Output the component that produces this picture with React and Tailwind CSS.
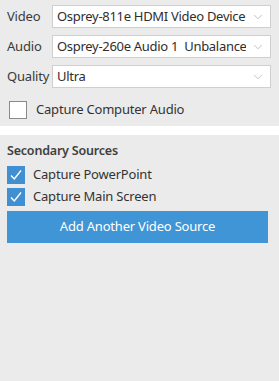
import { ChevronDown } from "lucide-react";

const font = { fontFamily: '"Noto Sans", "Open Sans", sans-serif' };

const SelectRow = ({ label, value }) => (
  <div className="flex items-center h-[23px]">
    <div className="w-[45px] shrink-0 text-[13px] tracking-[-0.2px] text-[#3a3a3a]">{label}</div>
    <div className="flex items-center h-full w-[219px] bg-white border border-[#cfcfcf] pl-[4px] pr-[5px]">
      <span className="flex-1 overflow-hidden whitespace-pre text-[13px] tracking-[-0.3px] text-[#2e2e2e] leading-[19px]">
        {value}
      </span>
      <ChevronDown className="w-[14px] h-[14px] text-[#a0a0a0] shrink-0 ml-[5px]" strokeWidth={1.1} />
    </div>
  </div>
);

const Checked = () => (
  <div className="w-[18px] h-[18px] bg-[#3f8fd2] flex items-center justify-center shrink-0">
    <svg width="14" height="14" viewBox="0 0 14 14" fill="none">
      <path d="M2 7.5 L5.3 11 L12 2.5" stroke="white" strokeWidth="1.4" />
    </svg>
  </div>
);

export default function App() {
  return (
    <div className="w-[279px] h-[381px] bg-[#ebebeb] flex flex-col" style={font}>
      <div className="pl-[7px] pt-[5px] flex flex-col gap-[7px]">
        <SelectRow label="Video" value="Osprey-811e HDMI Video Device" />
        <SelectRow label="Audio" value="Osprey-260e Audio 1  Unbalanced" />
        <SelectRow label="Quality" value="Ultra" />
        <div className="flex items-center h-[18px] mt-[6px] ml-[2px] mb-[6px]">
          <div className="w-[18px] h-[18px] bg-white border border-[#8a8a8a] shrink-0" />
          <span className="ml-[9px] text-[13px] tracking-[-0.2px] text-[#333]">Capture Computer Audio</span>
        </div>
      </div>
      <div className="h-[9px] bg-white mt-[1px]" />
      <div className="px-[7px] pt-[7px] flex flex-col">
        <div className="text-[12.5px] font-semibold tracking-[-0.2px] text-[#404040] h-[18px] leading-[18px]">Secondary Sources</div>
        <div className="flex items-center mt-[6px] h-[18px]">
          <Checked />
          <span className="ml-[8px] text-[13px] tracking-[-0.2px] text-[#333]">Capture PowerPoint</span>
        </div>
        <div className="flex items-center mt-[4px] h-[18px]">
          <Checked />
          <span className="ml-[8px] text-[13px] tracking-[-0.2px] text-[#333]">Capture Main Screen</span>
        </div>
        <button className="mt-[5px] w-[261px] h-[32px] bg-[#3f95d5] text-white text-[13px] tracking-[-0.2px] flex items-center justify-center">
          Add Another Video Source
        </button>
      </div>
    </div>
  );
}
